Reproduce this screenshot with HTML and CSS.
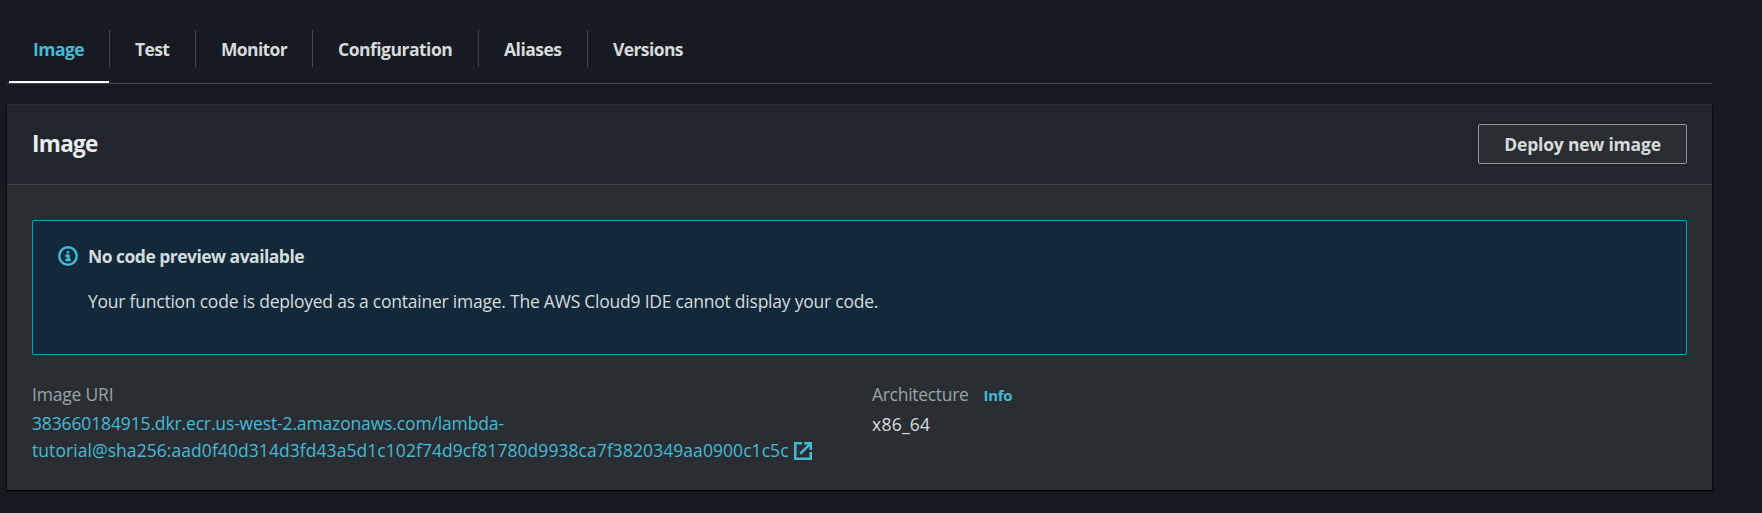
FILE: index.html
```
<!DOCTYPE html>
<html lang="en">
<head>
<meta charset="utf-8">
<title>Function image</title>
<link rel="stylesheet" href="styles.css">
</head>
<body>
<main class="page">
  <nav class="tabs">
    <a class="tab tab-image active"><span>Image</span></a>
    <a class="tab tab-test"><span>Test</span></a>
    <a class="tab tab-monitor"><span>Monitor</span></a>
    <a class="tab tab-configuration"><span>Configuration</span></a>
    <a class="tab tab-aliases"><span>Aliases</span></a>
    <a class="tab tab-versions"><span>Versions</span></a>
  </nav>
  <section class="card">
    <header class="card-header">
      <h2 class="card-title">Image</h2>
      <button class="button" type="button">Deploy new image</button>
    </header>
    <div class="card-body">
      <div class="alert">
        <svg class="info-icon" viewBox="0 0 20 20" fill="none" stroke="currentColor">
          <circle cx="10" cy="10" r="8.75" stroke-width="2.5"/>
          <path d="M10 5v2.4M7.3 9.9h3.2v4.5M7.3 14h5.6" stroke-width="2.6"/>
        </svg>
        <div class="alert-content">
          <h3 class="alert-title">No code preview available</h3>
          <p class="alert-text">Your function code is deployed as a container image. The AWS Cloud9 IDE cannot display your code.</p>
        </div>
      </div>
      <div class="columns">
        <div class="column">
          <div class="label label-uri">Image URI</div>
          <a class="uri"><span class="uri-host">383660184915.dkr.ecr.us-west-2.amazonaws.com/lambda-</span><br><span class="uri-digest">tutorial@sha256:aad0f40d314d3fd43a5d1c102f74d9cf81780d9938ca7f3820349aa0900c1c5c</span><svg class="external-icon" viewBox="0 0 18 18" fill="none" stroke="currentColor" stroke-width="2.5">
            <path d="M8 1.25H1.25v15.5h15.5V10M10.2 1.25h6.55v6.7M16.4 1.6L6.2 11.8"/>
          </svg></a>
        </div>
        <div class="column">
          <div class="label"><span class="label-arch">Architecture</span><a class="info-link">Info</a></div>
          <div class="value">x86_64</div>
        </div>
      </div>
    </div>
  </section>
</main>
</body>
</html>
```
FILE: styles.css
```
* { box-sizing: border-box; }
body {
  margin: 0;
  height: 513px;
  overflow: hidden;
  background: #171a21;
  color: #d5dbdb;
  font: 17.5px/27px "Open Sans", "Noto Sans", sans-serif;
}
h2, h3, p { margin: 0; }
.page { padding: 30px 50px 0 7px; }
.tabs {
  display: flex;
  height: 54px;
  padding-left: 2px;
  border-bottom: 1px solid #414750;
}
.tab {
  display: flex;
  flex-direction: column;
  justify-content: space-between;
  font-weight: 700;
  line-height: 38px;
  white-space: nowrap;
}
.tab span { display: block; height: 37px; padding-left: 25px; border-right: 1px solid #414750; }
.tab.active { color: #44b9d6; }
.tab.active span { padding-left: 24px; }
.tab.active::after { content: ""; height: 2px; margin-right: 1px; background: #fff; }
.tab-image { width: 101px; letter-spacing: -0.55px; }
.tab-test { width: 86px; letter-spacing: -0.6px; }
.tab-monitor { width: 117px; letter-spacing: -0.65px; }
.tab-configuration { width: 166px; letter-spacing: -0.5px; }
.tab-aliases { width: 109px; letter-spacing: -0.5px; }
.tab-versions { letter-spacing: -0.6px; }
.tab-versions span { border-right: 0; }
.card {
  height: 386px;
  margin-top: 20px;
  background: #2a2e33;
  box-shadow: 0 1px 1px #000c, 1px 1px 2px #0008, -1px 1px 2px #0008;
}
.card-header {
  display: flex;
  justify-content: space-between;
  height: 81px;
  padding: 19px 25px 0;
  background: #21252c;
  border-top: 1px solid #2b2e33;
  border-bottom: 1px solid #414750;
}
.card-title {
  color: #eaeded;
  font-size: 22.5px;
  font-weight: 700;
  line-height: 40px;
  letter-spacing: -0.7px;
}
.button {
  width: 209px;
  height: 40px;
  padding: 0;
  color: #d5dbdb;
  background: #2a2e33;
  border: 1px solid #879596;
  border-radius: 2px;
  font: 700 17.5px/38px "Open Sans", "Noto Sans", sans-serif;
  letter-spacing: -0.2px;
}
.card-body { padding: 35px 25px 0; }
.alert {
  display: flex;
  gap: 10px;
  height: 135px;
  padding: 22px 25px;
  background: #12293b;
  border: 1px solid #00a1c9;
  border-radius: 2px;
}
.info-icon { width: 20px; height: 20px; margin-top: 3px; color: #44b9d6; }
.alert-title { font-size: 17.5px; font-weight: 700; line-height: 27px; letter-spacing: -0.52px; }
.alert-text { margin-top: 18px; letter-spacing: -0.23px; }
.columns { display: grid; grid-template-columns: 840px 1fr; margin-top: 26px; }
.label { margin-bottom: 2px; color: #95a5a6; }
.label-uri { letter-spacing: -0.2px; }
.label-arch { letter-spacing: -0.3px; }
.info-link { margin-left: 15px; color: #44b9d6; font-size: 15px; font-weight: 700; letter-spacing: -0.3px; }
.uri { color: #44b9d6; white-space: nowrap; }
.uri-host { letter-spacing: -0.14px; }
.uri-digest { letter-spacing: 0.06px; }
.external-icon { width: 18px; height: 18px; margin-left: 5px; vertical-align: -3px; }
.value { letter-spacing: 0.25px; }
```
